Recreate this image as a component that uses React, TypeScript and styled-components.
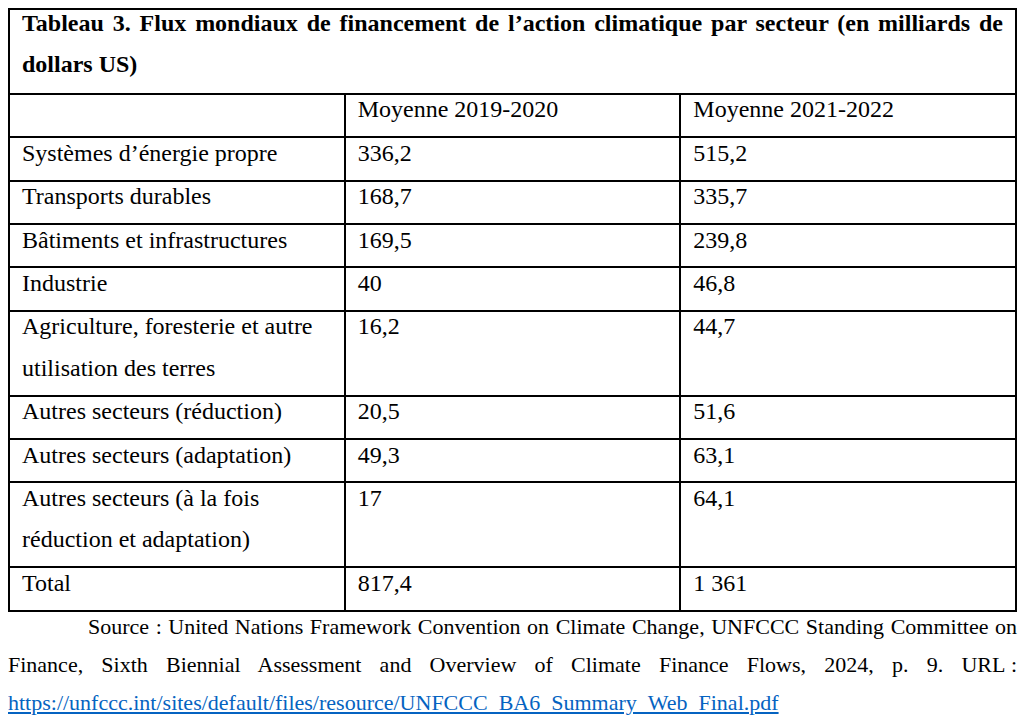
import styled, { createGlobalStyle } from "styled-components";

type RowType = {
  sector: string;
  avg2019: string;
  avg2021: string;
};

const rows: RowType[] = [
  { sector: "Systèmes d’énergie propre", avg2019: "336,2", avg2021: "515,2" },
  { sector: "Transports durables", avg2019: "168,7", avg2021: "335,7" },
  { sector: "Bâtiments et infrastructures", avg2019: "169,5", avg2021: "239,8" },
  { sector: "Industrie", avg2019: "40", avg2021: "46,8" },
  {
    sector: "Agriculture, foresterie et autre utilisation des terres",
    avg2019: "16,2",
    avg2021: "44,7",
  },
  { sector: "Autres secteurs (réduction)", avg2019: "20,5", avg2021: "51,6" },
  { sector: "Autres secteurs (adaptation)", avg2019: "49,3", avg2021: "63,1" },
  {
    sector: "Autres secteurs (à la fois réduction et adaptation)",
    avg2019: "17",
    avg2021: "64,1",
  },
  { sector: "Total", avg2019: "817,4", avg2021: "1\u00a0361" },
];

export default function App() {
  return (
    <>
      <GlobalStyle />
      <FigureStyled>
        <Table>
          <tbody>
            <tr>
              <Cell colSpan={3} $bold>
                <CellText $justify>
                  Tableau 3. Flux mondiaux de financement de l’action
                  climatique par secteur (en milliards de dollars US)
                </CellText>
              </Cell>
            </tr>
            <tr>
              <Cell>
                <CellText />
              </Cell>
              <Cell>
                <CellText>Moyenne 2019-2020</CellText>
              </Cell>
              <Cell>
                <CellText>Moyenne 2021-2022</CellText>
              </Cell>
            </tr>
            {rows.map((row) => (
              <tr key={row.sector}>
                <Cell>
                  <CellText>{row.sector}</CellText>
                </Cell>
                <Cell>
                  <CellText>{row.avg2019}</CellText>
                </Cell>
                <Cell>
                  <CellText>{row.avg2021}</CellText>
                </Cell>
              </tr>
            ))}
          </tbody>
        </Table>
        <Source>
          Source&nbsp;: United Nations Framework Convention on Climate Change,
          UNFCCC Standing Committee on Finance, Sixth Biennial Assessment and
          Overview of Climate Finance Flows, 2024, p. 9.{" "}
          <NoJustify>URL&nbsp;:</NoJustify>{" "}
          <Link href="https://unfccc.int/sites/default/files/resource/UNFCCC_BA6_Summary_Web_Final.pdf">
            https://unfccc.int/sites/default/files/resource/UNFCCC_BA6_Summary_Web_Final.pdf
          </Link>
        </Source>
      </FigureStyled>
    </>
  );
}

const GlobalStyle = createGlobalStyle`
  body {
    margin: 8px;
    background: #ffffff;
    color: #000000;
    font-family: "Liberation Serif", "Times New Roman", serif;
  }
`;

const FigureStyled = styled.div`
  width: 1009px;
`;

const Table = styled.table`
  width: 100%;
  border-collapse: collapse;
  table-layout: fixed;
`;

const Cell = styled.td<{ $bold?: boolean }>`
  border: 2px solid #000000;
  padding: 0 12px;
  vertical-align: top;
  font-size: 24px;
  font-weight: ${(p) => (p.$bold ? 700 : 400)};
`;

// le texte colle en haut de la ligne, comme dans Word (interligne 1,5)
const CellText = styled.div<{ $justify?: boolean }>`
  line-height: 41.4px;
  min-height: 41.4px;
  margin: ${(p) => (p.$justify ? "-7.4px 0 7.4px" : "-5.4px 0 5.4px")};
  text-align: ${(p) => (p.$justify ? "justify" : "left")};
`;

const Source = styled.p`
  margin: -4px 0 0;
  font-size: 22px;
  line-height: 38px;
  text-align: justify;
  text-indent: 80px;
`;

const NoJustify = styled.span`
  display: inline-block;
  text-indent: 0;
  white-space: nowrap;
`;

const Link = styled.a`
  color: #0563c1;
  text-decoration: underline;
`;
